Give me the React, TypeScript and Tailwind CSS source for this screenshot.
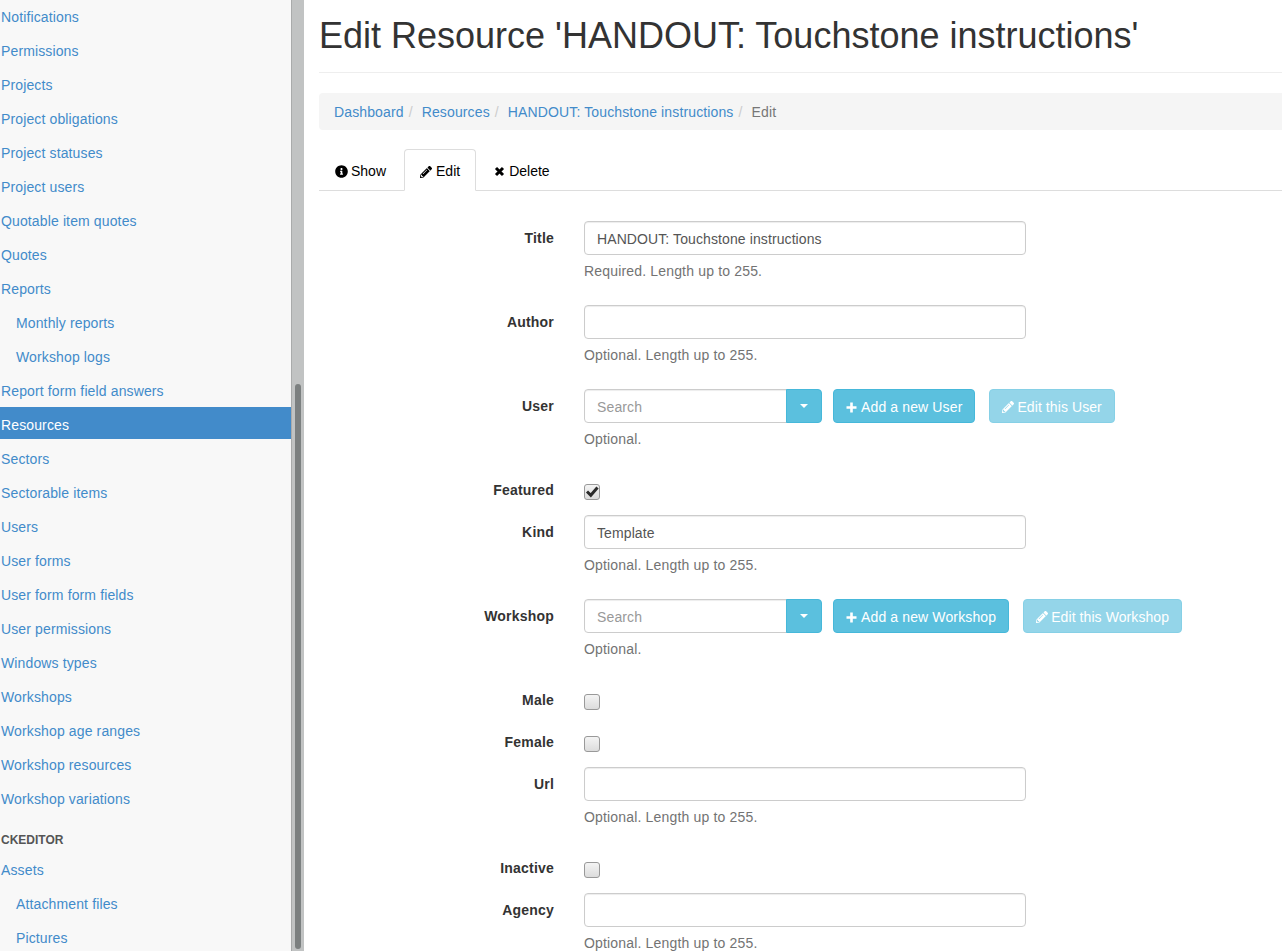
import { FaInfoCircle, FaPencilAlt } from "react-icons/fa";
import type { ReactNode } from "react";

type NavItem = { label: string; sub?: boolean; active?: boolean };

const navItems: NavItem[] = [
  { label: "Notifications" },
  { label: "Permissions" },
  { label: "Projects" },
  { label: "Project obligations" },
  { label: "Project statuses" },
  { label: "Project users" },
  { label: "Quotable item quotes" },
  { label: "Quotes" },
  { label: "Reports" },
  { label: "Monthly reports", sub: true },
  { label: "Workshop logs", sub: true },
  { label: "Report form field answers" },
  { label: "Resources", active: true },
  { label: "Sectors" },
  { label: "Sectorable items" },
  { label: "Users" },
  { label: "User forms" },
  { label: "User form form fields" },
  { label: "User permissions" },
  { label: "Windows types" },
  { label: "Workshops" },
  { label: "Workshop age ranges" },
  { label: "Workshop resources" },
  { label: "Workshop variations" },
];

const ckItems: NavItem[] = [
  { label: "Assets" },
  { label: "Attachment files", sub: true },
  { label: "Pictures", sub: true },
];

const PlusIcon = () => (
  <svg viewBox="0 0 11 11" className="w-[11px] h-[11px] mr-[4px]" fill="currentColor">
    <path d="M4.2 0.5h2.6v3.7h3.7v2.6H6.8v3.7H4.2V6.8H0.5V4.2h3.7z" />
  </svg>
);

const TimesIcon = () => (
  <svg viewBox="0 0 11 11" className="w-[11px] h-[11px]">
    <path d="M2 2l7 7M9 2l-7 7" fill="none" stroke="currentColor" strokeWidth="3" />
  </svg>
);

const NavRow = ({ label, sub, active }: NavItem) => (
  <li className="mb-[2px]">
    <a
      className={`block h-[32px] pt-[8px] leading-[20px] ${sub ? "pl-[16px]" : "pl-px"} ${
        active ? "bg-[#428bca] text-white" : "text-[#428bca]"
      }`}
    >
      {label}
    </a>
  </li>
);

const Sidebar = () => (
  <aside className="w-[291px] shrink-0 bg-[#f8f8f8] overflow-hidden">
    <ul className="-mt-px">
      {navItems.map((item) => (
        <NavRow key={item.label} {...item} />
      ))}
    </ul>
    <div className="mt-[15px] pl-px h-[24px] pt-[2px] text-[12px] leading-[20px] font-bold tracking-normal text-[#555]">
      CKEDITOR
    </div>
    <ul>
      {ckItems.map((item) => (
        <NavRow key={item.label} {...item} />
      ))}
    </ul>
  </aside>
);

const Scrollbar = () => (
  <div className="w-[13px] shrink-0 bg-[#c1c3c3] border-l border-[#a9abab] pl-[3px] pt-[384px]">
    <div className="w-[6px] h-[565px] rounded-[3px] bg-[#7c8080]" />
  </div>
);

const Field = ({ label, children }: { label: string; children: ReactNode }) => (
  <div className="flex mb-[15px]">
    <label className="w-[235px] shrink-0 pt-[7px] text-right font-bold text-[#333] leading-[20px] tracking-[0.2px]">
      {label}
    </label>
    <div className="ml-[30px] flex-1">{children}</div>
  </div>
);

const Help = ({ children }: { children: ReactNode }) => (
  <p className="mt-[6px] mb-[9px] text-[#737373] leading-[20px] tracking-[0.17px]">{children}</p>
);

const TextInput = ({ value }: { value?: string }) => (
  <input
    readOnly
    value={value ?? ""}
    className="block w-[442px] h-[34px] pt-[2px] px-[12px] border border-[#ccc] rounded-[4px] bg-white text-[#555] tracking-[0.1px] shadow-[inset_0_1px_1px_rgba(0,0,0,0.075)] outline-none"
  />
);

const Check = ({ checked }: { checked?: boolean }) => (
  <div className="relative mt-[11px] w-[16px] h-[16px] rounded-[3px] border border-[#999] bg-gradient-to-b from-[#f4f4f4] to-[#dcdcdc] shadow-[0_1px_0_rgba(255,255,255,0.6)]">
    {checked && (
      <svg viewBox="0 0 16 16" className="absolute -left-px -top-px w-[16px] h-[16px]">
        <path d="M3 7.5 L6.8 11.2 L13.5 3.5" fill="none" stroke="#2b2b2b" strokeWidth="3" />
      </svg>
    )}
  </div>
);

const InfoButton = ({
  icon,
  children,
  disabled,
  className,
}: {
  icon: ReactNode;
  children: ReactNode;
  disabled?: boolean;
  className?: string;
}) => (
  <a
    className={`flex items-center h-[34px] pt-[2px] px-[12px] border border-[#46b8da] rounded-[4px] bg-[#5bc0de] text-white ${
      disabled ? "opacity-65 tracking-[0.08px]" : ""
    } ${className ?? ""}`}
  >
    {icon}
    {children}
  </a>
);

const SearchRow = ({ name }: { name: string }) => (
  <div className="flex">
    <input
      readOnly
      placeholder="Search"
      className="block w-[203px] h-[34px] pt-[2px] px-[12px] border border-[#ccc] rounded-l-[4px] bg-white text-[#555] placeholder:text-[#999] shadow-[inset_0_1px_1px_rgba(0,0,0,0.075)] outline-none"
    />
    <div className="flex items-center justify-center w-[36px] h-[34px] -ml-px border border-[#46b8da] rounded-r-[4px] bg-[#5bc0de]">
      <span className="w-0 h-0 border-x-[4px] border-x-transparent border-t-[4px] border-t-white" />
    </div>
    <InfoButton className="ml-[11px]" icon={<PlusIcon />}>
      Add a new {name}
    </InfoButton>
    <InfoButton
      disabled
      className="ml-[14px]"
      icon={<FaPencilAlt className="w-[12px] h-[12px] mr-[3px]" />}
    >
      Edit this {name}
    </InfoButton>
  </div>
);

const tabs = [
  { label: "Show", icon: <FaInfoCircle className="w-[13px] h-[13px] -mr-px" /> },
  { label: "Edit", icon: <FaPencilAlt className="w-[12px] h-[12px]" />, active: true },
  { label: "Delete", icon: <TimesIcon /> },
];

const App = () => {
  return (
    <div className="flex h-[951px] overflow-hidden bg-white text-[14px] tracking-[0.13px] font-['Liberation_Sans',Arial,sans-serif]">
      <Sidebar />
      <Scrollbar />
      <main className="flex-1 min-w-0 pl-[15px]">
        <h1 className="pt-[16px] pb-[16px] border-b border-[#eee] text-[36px] leading-[40px] tracking-normal text-[#333]">
          Edit Resource 'HANDOUT: Touchstone instructions'
        </h1>
        <ol className="flex mt-[20px] h-[37px] items-center pt-[2px] px-[15px] bg-[#f5f5f5] rounded-l-[4px] text-[#428bca]">
          <li>Dashboard</li>
          <li className="px-[5px] text-[#ccc]">/</li>
          <li className="ml-[4px]">Resources</li>
          <li className="px-[5px] text-[#ccc]">/</li>
          <li className="ml-[4px]">HANDOUT: Touchstone instructions</li>
          <li className="px-[5px] text-[#ccc]">/</li>
          <li className="ml-[4px] text-[#777]">Edit</li>
        </ol>
        <ul className="flex mt-[19px] h-[42px] border-b border-[#ddd] text-black tracking-normal">
          {tabs.map((tab) => (
            <li key={tab.label} className="mr-[2px]">
              <a
                className={`flex items-center gap-[4px] pt-[3px] px-[15px] border rounded-t-[4px] ${
                  tab.active
                    ? "h-[42px] border-[#ddd] border-b-white bg-white"
                    : "h-[41px] border-transparent"
                }`}
              >
                {tab.icon}
                {tab.label}
              </a>
            </li>
          ))}
        </ul>
        <form className="mt-[30px]">
          <Field label="Title">
            <TextInput value="HANDOUT: Touchstone instructions" />
            <Help>Required. Length up to 255.</Help>
          </Field>
          <Field label="Author">
            <TextInput />
            <Help>Optional. Length up to 255.</Help>
          </Field>
          <Field label="User">
            <SearchRow name="User" />
            <Help>Optional.</Help>
          </Field>
          <Field label="Featured">
            <Check checked />
          </Field>
          <Field label="Kind">
            <TextInput value="Template" />
            <Help>Optional. Length up to 255.</Help>
          </Field>
          <Field label="Workshop">
            <SearchRow name="Workshop" />
            <Help>Optional.</Help>
          </Field>
          <Field label="Male">
            <Check />
          </Field>
          <Field label="Female">
            <Check />
          </Field>
          <Field label="Url">
            <TextInput />
            <Help>Optional. Length up to 255.</Help>
          </Field>
          <Field label="Inactive">
            <Check />
          </Field>
          <Field label="Agency">
            <TextInput />
            <Help>Optional. Length up to 255.</Help>
          </Field>
        </form>
      </main>
    </div>
  );
};

export default App;
